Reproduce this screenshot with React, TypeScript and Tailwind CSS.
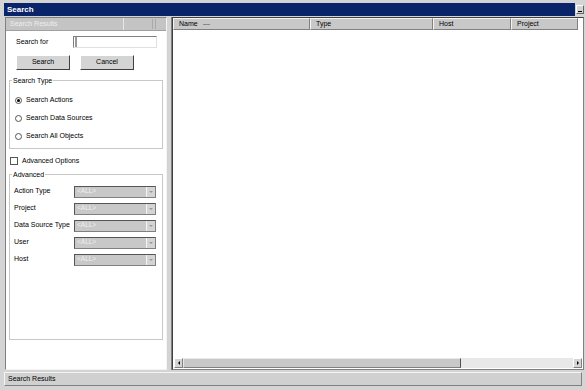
import React from 'react';

const font = { fontFamily: '"Liberation Sans", Arial, sans-serif' };

const Radio: React.FC<{ checked?: boolean; label: string }> = ({ checked, label }) => (
    <div className="flex items-center h-[18px] pl-[5px] gap-[4px]">
        <span className="w-[7px] h-[7px] rounded-full border border-[#555] bg-white flex items-center justify-center">
            {checked && <span className="w-[3px] h-[3px] rounded-full bg-black" />}
        </span>
        <span>{label}</span>
    </div>
);

const Select: React.FC = () => (
    <div className="w-[82px] h-[12px] border border-[#808080] border-t-[#555] border-l-[#555] bg-[#c8c8c8] flex items-center">
        <span className="flex-1 pl-[2px] text-[#f0f0f0] text-[6.5px] leading-none">&lt;ALL&gt;</span>
        <span className="w-[9px] h-[10px] bg-[#d4d4d4] border-l border-[#f4f4f4] flex items-center justify-center">
            <span className="w-0 h-0 border-l-[2px] border-r-[2px] border-t-[2px] border-l-transparent border-r-transparent border-t-[#999]" />
        </span>
    </div>
);

export default function App() {
    const advanced = ['Action Type', 'Project', 'Data Source Type', 'User', 'Host'];
    const cols = [
        { name: 'Name', w: 'w-[137px]', sort: true },
        { name: 'Type', w: 'w-[123px]' },
        { name: 'Host', w: 'w-[78px]' },
        { name: 'Project', w: 'flex-1' },
    ];

    return (
        <div className="w-[586px] h-[390px] bg-[#d4d4d4] text-[7px] text-black flex flex-col overflow-hidden" style={font}>
            {/* Title bar */}
            <div className="flex items-center mt-[3px] ml-[4px] mr-[2px] h-[13px]">
                <div className="flex-1 h-full bg-[#0a246a] text-white font-bold text-[8px] flex items-center pl-[3px]">Search</div>
                <div className="w-[8px] h-[9px] ml-[1px] bg-[#d4d4d4] border border-[#fff] border-r-[#666] border-b-[#666] flex items-end justify-center pb-[1px]">
                    <span className="w-[4px] h-[1px] bg-black" />
                </div>
            </div>

            {/* Main area */}
            <div className="flex flex-1 min-h-0 ml-[5px] mr-[2px] mt-[1px]">
                {/* Left panel */}
                <div className="w-[162px] flex flex-col border border-[#808080] border-r-[#f4f4f4] border-b-[#f4f4f4] bg-white">
                    <div className="h-[13px] bg-[#c4c4c4] border-b border-[#a0a0a0] flex items-center pl-[4px] text-[#eeeeee] relative">
                        Search Results
                        <span className="absolute left-[117px] top-0 h-full w-px bg-[#e0e8f0]" />
                        <span className="absolute left-[146px] top-[1px] h-[10px] w-px bg-[#aaa]" />
                        <span className="absolute left-[149px] top-[1px] h-[10px] w-px bg-[#aaa]" />
                    </div>

                    <div className="flex items-center pl-[10px] mt-[5px] h-[12px]">
                        <span className="w-[57px]">Search for</span>
                        <div className="w-[84px] h-[12px] border border-[#808080] border-r-[#e0e0e0] border-b-[#e0e0e0] bg-white flex items-center">
                            <span className="w-[2px] h-[10px] bg-[#999] ml-[1px]" />
                        </div>
                    </div>

                    <div className="flex gap-[10px] pl-[10px] mt-[7px]">
                        <div className="w-[54px] h-[15px] bg-[#d4d4d4] border border-[#fff] border-r-[#404040] border-b-[#404040] flex items-center justify-center">Search</div>
                        <div className="w-[54px] h-[15px] bg-[#d4d4d4] border border-[#fff] border-r-[#404040] border-b-[#404040] flex items-center justify-center">Cancel</div>
                    </div>

                    {/* Search Type */}
                    <div className="relative mx-[3px] mt-[10px] h-[69px] border border-[#c8c8c8] pt-[10px]">
                        <span className="absolute left-[2px] top-[-5px] bg-white px-[1px] leading-[9px]">Search Type</span>
                        <Radio checked label="Search Actions" />
                        <Radio label="Search Data Sources" />
                        <Radio label="Search All Objects" />
                    </div>

                    <div className="flex items-center gap-[4px] pl-[4px] mt-[7px] h-[10px]">
                        <span className="w-[8px] h-[8px] border border-[#555] bg-white" />
                        <span>Advanced Options</span>
                    </div>

                    {/* Advanced */}
                    <div className="relative mx-[3px] mt-[8px] h-[166px] border border-[#c8c8c8] pt-[8px]">
                        <span className="absolute left-[2px] top-[-5px] bg-white px-[1px] leading-[9px]">Advanced</span>
                        {advanced.map((label) => (
                            <div key={label} className="flex items-center h-[17px] pl-[4px]">
                                <span className="w-[60px] whitespace-nowrap">{label}</span>
                                <Select />
                            </div>
                        ))}
                    </div>
                </div>

                {/* Splitter */}
                <div className="w-[5px] border-r border-[#808080]" />

                {/* Right panel */}
                <div className="flex-1 flex flex-col border border-[#808080] border-l-[#404040] border-t-[#404040] bg-white">
                    <div className="flex h-[12px]">
                        {cols.map((c) => (
                            <div key={c.name} className={`${c.w} h-full bg-[#c8c8c8] border border-[#f4f4f4] border-r-[#808080] border-b-[#808080] flex items-center pl-[5px] gap-[5px]`}>
                                <span>{c.name}</span>
                                {c.sort && <span className="w-[7px] h-[1px] bg-[#888] mt-[1px]" />}
                            </div>
                        ))}
                        <div className="w-[5px] bg-white" />
                    </div>
                    <div className="flex-1" />
                    <div className="flex h-[10px] mx-[1px] mb-[1px]">
                        <div className="w-[9px] h-full bg-[#d4d4d4] border border-[#fff] border-r-[#808080] border-b-[#808080] flex items-center justify-center">
                            <span className="w-0 h-0 border-t-[2px] border-b-[2px] border-r-[2px] border-t-transparent border-b-transparent border-r-black" />
                        </div>
                        <div className="w-[278px] h-full bg-[#c8c8c8] border border-[#e8e8e8] border-r-[#505050] border-b-[#808080]" />
                        <div className="flex-1 h-full bg-[#e8e8e8]" />
                        <div className="w-[9px] h-full bg-[#d4d4d4] border border-[#fff] border-r-[#808080] border-b-[#808080] flex items-center justify-center">
                            <span className="w-0 h-0 border-t-[2px] border-b-[2px] border-l-[2px] border-t-transparent border-b-transparent border-l-black" />
                        </div>
                    </div>
                </div>
            </div>

            {/* Status bar */}
            <div className="h-[14px] mx-[4px] mt-[2px] mb-[4px] bg-[#d0d0d0] border border-[#f4f4f4] border-b-[#808080] border-r-[#808080] flex items-center pl-[3px]">
                Search Results
            </div>
        </div>
    );
}
